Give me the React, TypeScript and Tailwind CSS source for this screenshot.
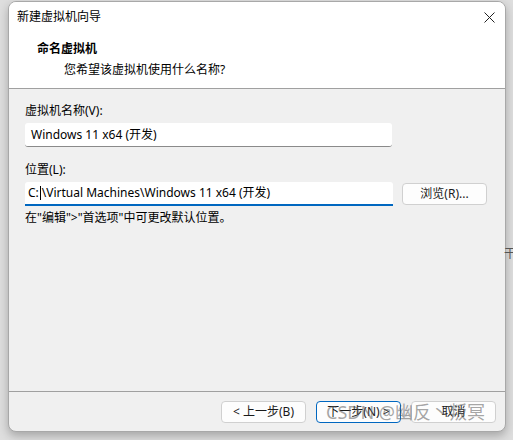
import React from 'react';

const font = { fontFamily: '"Segoe UI", "Noto Sans", "Noto Sans CJK SC", sans-serif' };

function Button({ children, primary }: { children: React.ReactNode; primary?: boolean }) {
  return (
    <button
      className={
        'flex h-[22px] w-[85px] items-center justify-center rounded-[4px] bg-[#fdfdfd] text-[12px] text-[#1a1a1a] ' +
        (primary ? 'border border-[#0067c0]' : 'border border-[#d0d0d0]')
      }
    >
      {children}
    </button>
  );
}

export default function App() {
  return (
    <div className="relative h-[440px] w-[513px] overflow-hidden bg-[#dedede]" style={font}>
      <div className="ml-[8px] mt-[1px] flex h-[431px] w-[498px] flex-col overflow-hidden rounded-[8px] border border-[#a8a8a8] bg-[#f0f0f0] shadow-[0_4px_10px_rgba(0,0,0,0.25)]">
        {/* header */}
        <div className="h-[87px] shrink-0 border-b border-[#a0a0a0] bg-white">
          <div className="flex h-[30px] items-center justify-between pl-[8px] pr-[10px]">
            <span className="text-[12px] text-black">新建虚拟机向导</span>
            <svg width="11" height="11" viewBox="0 0 11 11" className="text-[#222]">
              <path d="M0.5 0.5 L10.5 10.5 M10.5 0.5 L0.5 10.5" stroke="currentColor" strokeWidth="1" />
            </svg>
          </div>
          <div className="pl-[28px] pt-[9px] text-[12px] font-bold leading-[16px] text-black">命名虚拟机</div>
          <div className="pl-[55px] pt-[5px] text-[12px] leading-[16px] text-black">您希望该虚拟机使用什么名称?</div>
        </div>

        {/* body */}
        <div className="flex flex-1 flex-col pl-[16px] pt-[14px]">
          <div className="text-[12px] leading-[16px] text-black">虚拟机名称(V):</div>
          <div className="mt-[4px] flex h-[24px] w-[367px] items-center rounded-[3px] border-b border-[#8a8a8a] bg-white pl-[6px] text-[12px] text-black">
            Windows 11 x64 (开发)
          </div>

          <div className="mt-[15px] text-[12px] leading-[16px] text-black">位置(L):</div>
          <div className="mt-[4px] flex items-center gap-[9px]">
            <div className="flex h-[24px] w-[368px] items-center rounded-t-[3px] border-b-2 border-[#0067c0] bg-white pl-[3px] text-[12px] text-black">
              <span>C:</span>
              <span className="mx-[1px] inline-block h-[14px] w-px bg-black" />
              <span>\Virtual Machines\Windows 11 x64 (开发)</span>
            </div>
            <Button>浏览(R)...</Button>
          </div>
          <div className="mt-[4px] text-[12px] leading-[16px] text-black">在"编辑"&gt;"首选项"中可更改默认位置。</div>
        </div>

        {/* footer */}
        <div className="flex h-[40px] shrink-0 items-start justify-end gap-[10px] border-t border-[#a0a0a0] pr-[9px] pt-[9px]">
          <Button>&lt; 上一步(B)</Button>
          <Button primary>下一步(N) &gt;</Button>
          <Button>取消</Button>
        </div>
      </div>

      <span className="absolute left-[504px] top-[245px] text-[12px] text-[#555]">干</span>
      <span className="pointer-events-none absolute left-[326px] top-[399px] text-[18px] leading-[26px] text-[rgba(90,90,90,0.55)]">
        CSDN @幽反丶叛冥
      </span>
    </div>
  );
}
